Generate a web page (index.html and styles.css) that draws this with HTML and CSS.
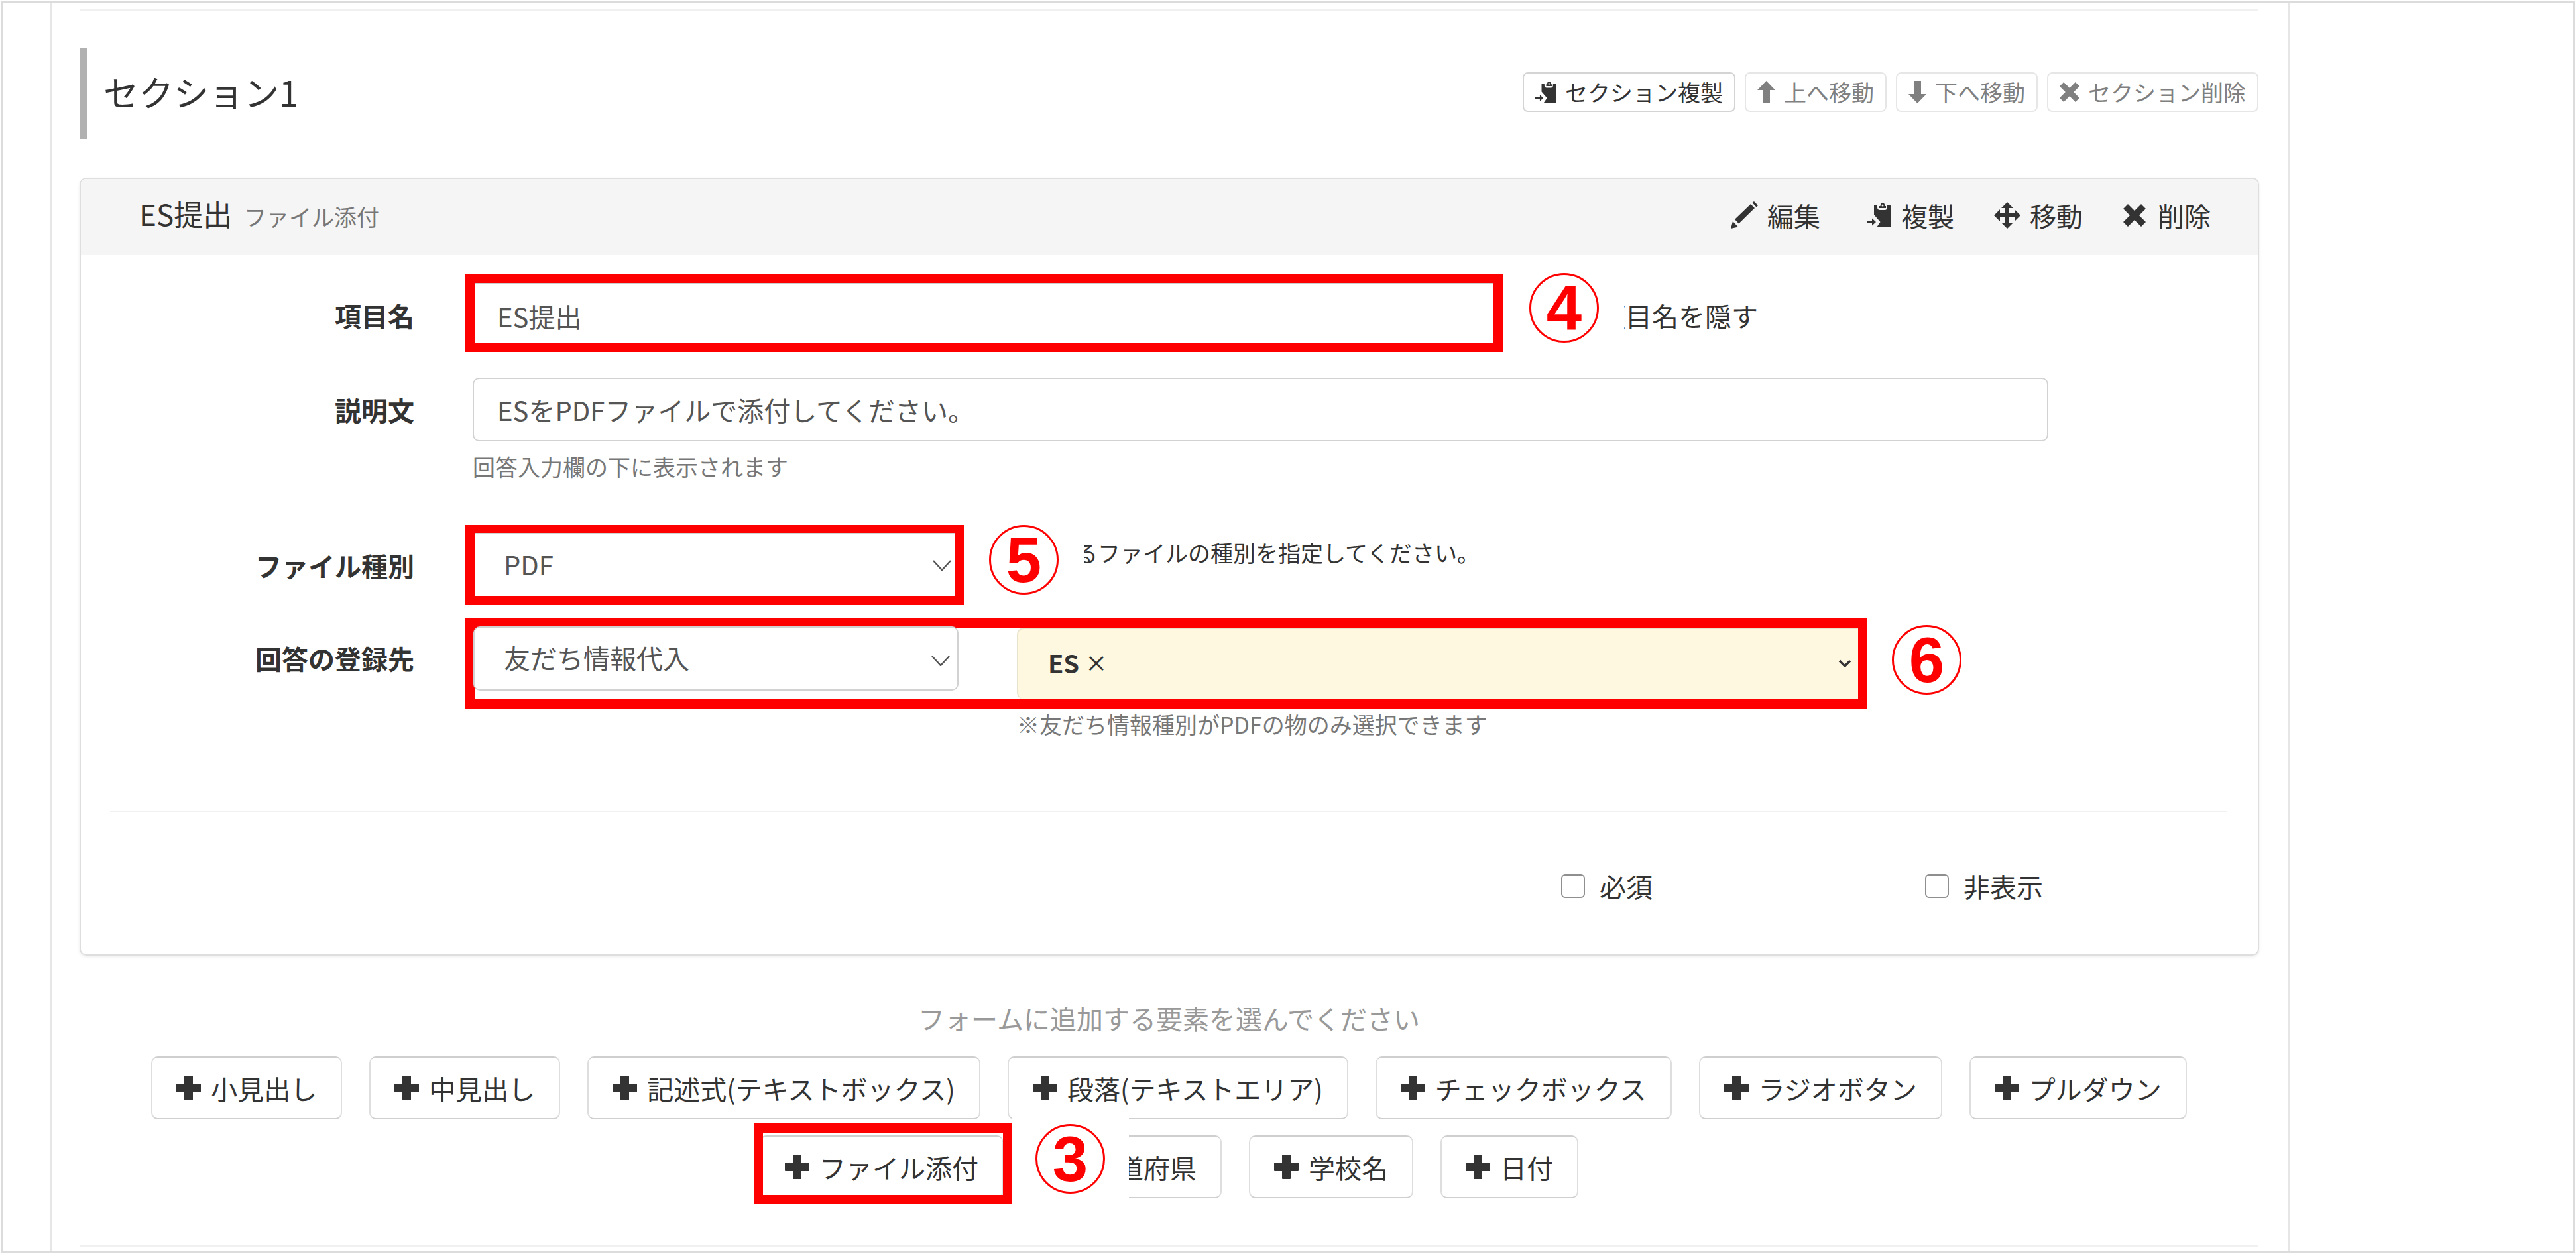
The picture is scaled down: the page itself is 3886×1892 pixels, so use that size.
FILE: index.html
```html
<!DOCTYPE html>
<html lang="ja">
<head>
<meta charset="utf-8">
<title>フォーム編集</title>
<link rel="stylesheet" href="styles.css">
</head>
<body>
<svg class="defs" aria-hidden="true">
  <symbol id="i-pencil" viewBox="0 0 42 41"><path d="M0 41 3 30 11 38.500ZM6 27 30 4 36 10 12 33.500ZM32.500 2 35 0 41 6 38.500 8.500Z"/></symbol>
  <symbol id="i-copy" viewBox="0 0 37 37"><path d="M11 4H16V7Q16 11 20 11H27Q31 11 31 7V4H35.500Q37 4 37 5.500V35.500Q37 37 35.500 37H15L20.500 29 11 18ZM19 8V5H20.500Q21 0 24 0 27 0 27.500 5H29V8ZM24 2.500A1.500 1.500 0 1 0 24 5.500 1.500 1.500 0 1 0 24 2.500ZM0 27.500H8V23.500L14 29 8 34.500V30.500H0Z" fill-rule="evenodd"/></symbol>
  <symbol id="i-move" viewBox="0 0 40 40"><path d="M20 0 29 9H23V17H31V11L40 20 31 29V23H23V31H29L20 40 11 31H17V23H9V29L0 20 9 11V17H17V9H11Z"/></symbol>
  <symbol id="i-x" viewBox="0 0 34 34"><path d="M7 0 17 10 27 0 34 7 24 17 34 27 27 34 17 24 7 34 0 27 10 17 0 7Z"/></symbol>
  <symbol id="i-up" viewBox="0 0 27 34"><path d="M13.500 0 27 14H19V34H8V14H0Z"/></symbol>
  <symbol id="i-down" viewBox="0 0 27 34"><path d="M8 0H19V20H27L13.500 34 0 20H8Z"/></symbol>
  <symbol id="i-plus" viewBox="0 0 37 37"><path d="M12 1Q12 0 13 0H24Q25 0 25 1V12H36Q37 12 37 13V24Q37 25 36 25H25V36Q25 37 24 37H13Q12 37 12 36V25H1Q0 25 0 24V13Q0 12 1 12H12Z"/></symbol>
  <symbol id="i-chev" viewBox="0 0 28 16"><path d="M1 1 14 15 27 1" fill="none" stroke="currentColor" stroke-width="2.500"/></symbol>
  <symbol id="i-chev-bold" viewBox="0 0 20 12"><path d="M2 2 10 10 18 2" fill="none" stroke="currentColor" stroke-width="3.500"/></symbol>
</svg>

<div class="frame">
  <main class="main">
    <div class="rule"></div>

    <section class="sec-head">
      <h1 class="sec-title">セクション1</h1>
      <div class="sec-actions">
        <button class="sec-btn"><svg class="ic ic-sec-copy"><use href="#i-copy"/></svg>セクション複製</button>
        <button class="sec-btn sec-btn-off"><svg class="ic ic-arrow"><use href="#i-up"/></svg>上へ移動</button>
        <button class="sec-btn sec-btn-off"><svg class="ic ic-arrow"><use href="#i-down"/></svg>下へ移動</button>
        <button class="sec-btn sec-btn-off"><svg class="ic ic-sec-x"><use href="#i-x"/></svg>セクション削除</button>
      </div>
    </section>

    <section class="card">
      <header class="card-head">
        <div class="card-title">ES提出 <small class="card-type">ファイル添付</small></div>
        <div class="card-actions">
          <span class="act act-edit"><svg class="ic ic-pencil"><use href="#i-pencil"/></svg>編集</span>
          <span class="act act-copy"><svg class="ic ic-copy"><use href="#i-copy"/></svg>複製</span>
          <span class="act act-move"><svg class="ic ic-move"><use href="#i-move"/></svg>移動</span>
          <span class="act act-del"><svg class="ic ic-x"><use href="#i-x"/></svg>削除</span>
        </div>
      </header>

      <div class="row row-name">
        <label class="lbl lbl-name">項目名</label>
        <div class="mark mark-name">
          <div class="field field-name">ES提出</div>
          <div class="callout callout-4"><span class="num">4</span></div>
        </div>
        <span class="hide-opt">項目名を隠す</span>
      </div>

      <div class="row row-desc">
        <label class="lbl">説明文</label>
        <div class="field field-desc">ESをPDFファイルで添付してください。</div>
      </div>
      <p class="help help-desc">回答入力欄の下に表示されます</p>

      <div class="row row-type">
        <label class="lbl">ファイル種別</label>
        <div class="mark mark-type">
          <div class="select select-type">PDF<svg class="chev"><use href="#i-chev"/></svg></div>
          <div class="callout callout-5"><span class="num">5</span></div>
        </div>
        <span class="type-note">るファイルの種別を指定してください。</span>
      </div>

      <div class="row row-dest">
        <label class="lbl lbl-dest">回答の登録先</label>
        <div class="mark mark-dest">
          <div class="select select-type">友だち情報代入<svg class="chev"><use href="#i-chev"/></svg></div>
          <div class="select select-value">ES <span class="times">×</span><svg class="chev-sm"><use href="#i-chev-bold"/></svg></div>
          <div class="callout callout-6"><span class="num">6</span></div>
        </div>
      </div>
      <p class="help help-dest">※友だち情報種別がPDFの物のみ選択できます</p>

      <div class="card-rule"></div>

      <div class="checks">
        <label class="check"><span class="box"></span>必須</label>
        <label class="check"><span class="box"></span>非表示</label>
      </div>
    </section>

    <p class="prompt">フォームに追加する要素を選んでください</p>

    <div class="adders">
      <button class="add"><svg class="ic ic-plus"><use href="#i-plus"/></svg>小見出し</button>
      <button class="add"><svg class="ic ic-plus"><use href="#i-plus"/></svg>中見出し</button>
      <button class="add"><svg class="ic ic-plus"><use href="#i-plus"/></svg>記述式(テキストボックス)</button>
      <button class="add"><svg class="ic ic-plus"><use href="#i-plus"/></svg>段落(テキストエリア)</button>
      <button class="add"><svg class="ic ic-plus"><use href="#i-plus"/></svg>チェックボックス</button>
      <button class="add"><svg class="ic ic-plus"><use href="#i-plus"/></svg>ラジオボタン</button>
      <button class="add"><svg class="ic ic-plus"><use href="#i-plus"/></svg>プルダウン</button>
      <button class="add add-marked"><svg class="ic ic-plus"><use href="#i-plus"/></svg>ファイル添付
        <span class="callout callout-3"><span class="num">3</span></span>
      </button>
      <button class="add"><svg class="ic ic-plus"><use href="#i-plus"/></svg>都道府県</button>
      <button class="add"><svg class="ic ic-plus"><use href="#i-plus"/></svg>学校名</button>
      <button class="add"><svg class="ic ic-plus"><use href="#i-plus"/></svg>日付</button>
    </div>

    <div class="rule rule-end"></div>
  </main>
</div>
</body>
</html>
```

FILE: styles.css
```css
* { box-sizing: border-box; }
html, body { margin: 0; padding: 0; background: #fff; }
body {
  width: 3886px;
  height: 1892px;
  overflow: hidden;
  font-family: "Noto Sans CJK JP", "Noto Sans", sans-serif;
  font-size: 40px;
  line-height: 40px;
  color: #333;
}
.defs { display: none; }
.ic { fill: currentColor; flex: none; display: block; }

.frame {
  margin: 1px 1px 0;
  height: 1890px;
  border: 3px solid #dcdcdc;
  padding-left: 71px;
}
.main {
  width: 3379px;
  height: 100%;
  border-left: 3px solid #e6e6e6;
  border-right: 3px solid #e6e6e6;
  padding: 9px 44px 0 42px;
}
.rule { height: 3px; background: #f1f1f1; }
.rule-end { margin-top: 70px; }

/* section header */
.sec-head {
  margin-top: 56px;
  display: flex;
  justify-content: space-between;
  align-items: center;
}
.sec-title {
  margin: 0;
  height: 138px;
  padding: 0 0 7px 25px;
  border-left: 11px solid #b1b1b1;
  display: flex;
  align-items: center;
  font-size: 53px;
  font-weight: 400;
  line-height: 60px;
  color: #333;
}
.sec-actions { display: flex; gap: 14px; margin-bottom: 4px; }
.sec-btn {
  height: 60px;
  padding: 0 17px;
  display: flex;
  align-items: center;
  gap: 13px;
  background: #fff;
  border: 2px solid #d4d4d4;
  border-radius: 8px;
  font: inherit;
  font-size: 34px;
  color: #333;
}
.sec-btn-off { color: #808080; border-color: #e6e6e6; }
.ic-sec-copy { width: 32px; height: 32px; }
.ic-arrow { width: 27px; height: 34px; }
.ic-sec-x { width: 30px; height: 30px; }

/* card */
.card {
  margin-top: 58px;
  width: 3288px;
  border: 2px solid #dedede;
  border-radius: 10px;
  box-shadow: 0 2px 4px rgba(0,0,0,.08);
  padding-bottom: 83px;
}
.card-head {
  height: 115px;
  background: #f5f5f5;
  border-radius: 8px 8px 0 0;
  padding: 0 71px 6px 88px;
  display: flex;
  align-items: center;
  justify-content: space-between;
}
.card-title { font-size: 44px; line-height: 50px; color: #333; }
.card-type { font-size: 34px; color: #777; margin-left: 8px; }
.card-actions { display: flex; align-items: center; }
.act { display: flex; align-items: center; font-size: 40px; }
.act-edit { gap: 13px; }
.act-copy { gap: 15px; margin-left: 70px; }
.act-move { gap: 14px; margin-left: 60px; }
.act-del { gap: 18px; margin-left: 61px; }
.ic-pencil { width: 42px; height: 41px; }
.ic-copy { width: 37px; height: 37px; }
.ic-move { width: 40px; height: 40px; }
.ic-x { width: 34px; height: 34px; }

/* rows */
.row { display: flex; align-items: center; }
.lbl {
  flex: none;
  width: 503px;
  text-align: right;
  font-weight: 700;
  font-size: 40px;
  color: #333;
}
.lbl-name { margin-top: 8px; }
.mark {
  position: relative;
  flex: none;
  margin-left: 77px;
  border: 14px solid #f00;
  background: #fff;
}
.field {
  background: #fff;
  border: 2px solid #d2d2d2;
  border-radius: 10px;
  padding-left: 35px;
  display: flex;
  align-items: center;
  font-size: 40px;
  color: #555;
}
.row-name { margin-top: 28px; }
.mark-name { width: 1565px; height: 118px; }
.field-name { height: 90px; border: 0; border-top: 2px solid #ccc; border-radius: 0; padding: 8px 0 0 34px; }
.hide-opt { margin: 8px 0 0 145px; font-size: 40px; color: #333; }

.row-desc { margin-top: 39px; }
.field-desc { margin-left: 88px; width: 2377px; height: 96px; }
.help { margin: 0; font-size: 34px; color: #777; }
.help-desc { margin: 18px 0 0 591px; }

.row-type { margin-top: 68px; }
.mark-type { width: 752px; height: 121px; }
.select {
  flex: none;
  background: #fff;
  border: 2px solid #d2d2d2;
  border-radius: 10px;
  padding: 0 0 4px 44px;
  display: flex;
  align-items: center;
  font-size: 40px;
  color: #555;
}
.select-type { position: relative; margin: -2px 0 0 -2px; width: 732px; height: 97px; }
.mark-type .select-type { width: 724px; margin: -2px 0 0 0; border-width: 2px 0 0; border-radius: 0; height: 95px; }
.chev { position: absolute; right: 11px; top: 42px; width: 28px; height: 16px; color: #555; }
.mark-type .chev { right: 5px; top: 39px; }
.type-note { margin: 0 0 38px 168px; font-size: 34px; line-height: 40px; color: #333; }

.row-dest { margin-top: 20px; align-items: flex-start; }
.lbl-dest { margin-top: 40px; }
.mark-dest {
  width: 2115px;
  height: 136px;
  display: flex;
  gap: 88px;
}
.select-value {
  position: relative;
  width: 1269px;
  height: 108px;
  background: #fff8e1;
  border-color: #e8e2cc;
  border-width: 2px 0 0 2px;
  border-radius: 10px 0 0 10px;
  padding: 0 0 4px 45px;
  font-size: 38px;
  font-weight: 700;
  color: #333;
  white-space: pre;
}
.times { font-size: 34px; font-weight: 500; }
.chev-sm { position: absolute; right: 10px; top: 46px; width: 20px; height: 12px; color: #333; }
.help-dest { margin: 4px 0 0 1412px; }

.card-rule { margin: 110px 46px 0 44px; height: 2px; background: #f1f1f1; }
.checks { margin: 92px 0 0 2233px; display: flex; gap: 411px; }
.check { display: flex; align-items: center; gap: 22px; font-size: 40px; color: #333; }
.box { width: 36px; height: 36px; background: #fff; border: 2px solid #8f8f8f; border-radius: 6px; }

/* add buttons */
.prompt { margin: 74px 0 0; text-align: center; font-size: 40px; color: #999; }
.adders {
  margin-top: 38px;
  display: flex;
  flex-wrap: wrap;
  justify-content: center;
  gap: 24px 41px;
}
.add {
  position: relative;
  height: 95px;
  padding: 0 36px;
  display: flex;
  align-items: center;
  gap: 15px;
  background: #fff;
  border: 2px solid #dedede;
  border-top-color: #cfcfcf;
  border-bottom-color: #cfcfcf;
  border-radius: 10px;
  font: inherit;
  font-size: 40px;
  color: #333;
}
.ic-plus { width: 37px; height: 37px; }
.add-marked::after {
  content: "";
  position: absolute;
  left: -11px;
  right: -15px;
  top: -20px;
  bottom: -11px;
  border: 14px solid #f00;
  pointer-events: none;
}

/* numbered callouts that sit over the page */
.callout {
  position: absolute;
  z-index: 2;
  background: #fff;
}
.num {
  position: absolute;
  width: 105px;
  height: 105px;
  border: 3px solid #f00;
  border-radius: 50%;
  display: flex;
  align-items: center;
  justify-content: center;
  font-family: "Liberation Sans", Arial, sans-serif;
  font-weight: 700;
  font-size: 96px;
  line-height: 1;
  color: #f00;
}
.callout-4 { left: calc(100% + 14px); top: -22px; width: 183px; height: 122px; }
.callout-4 .num { left: 40px; top: 7px; }
.callout-5 { left: calc(100% + 14px); top: -14px; width: 182px; height: 121px; }
.callout-5 .num { left: 38px; top: 0; }
.callout-6 { left: calc(100% + 14px); top: -6px; width: 160px; height: 121px; }
.callout-6 .num { left: 37px; top: 2px; }
.callout-3 { left: calc(100% + 15px); top: -31px; width: 176px; height: 138px; }
.callout-3 .num { left: 35px; top: 12px; }
```
